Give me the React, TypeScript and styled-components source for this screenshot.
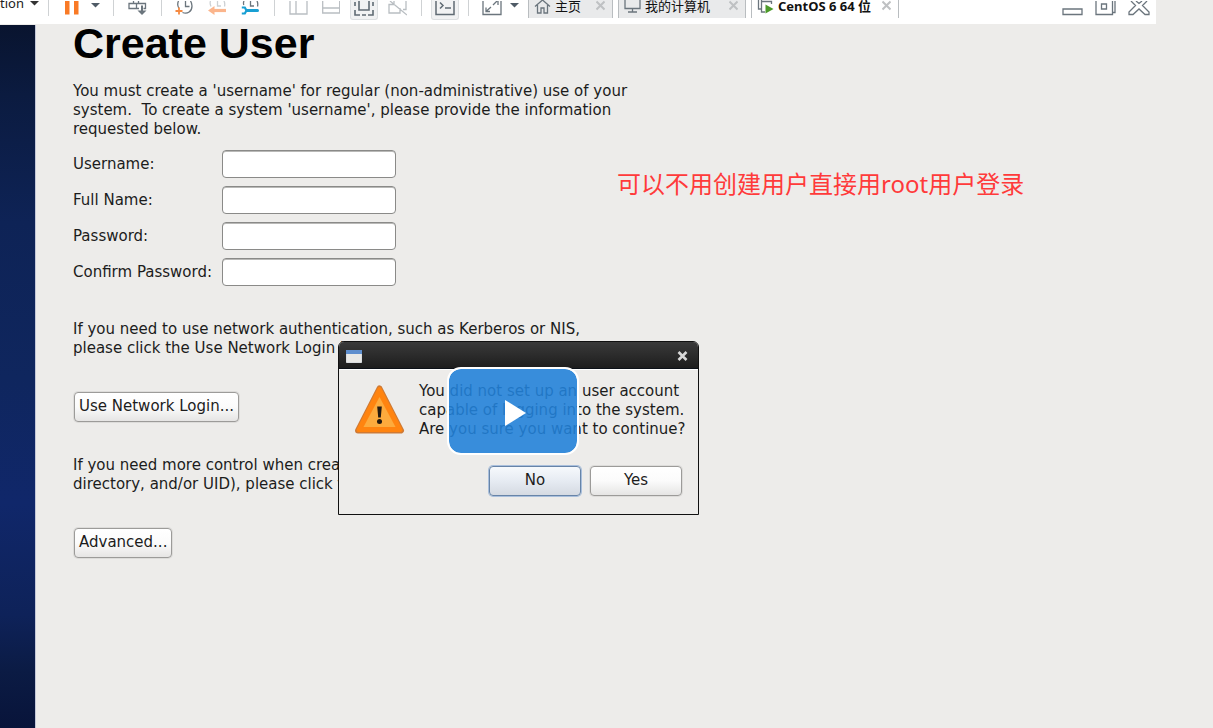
import React from 'react';
import styled, { createGlobalStyle } from 'styled-components';

const GlobalStyle = createGlobalStyle`
  * { box-sizing: border-box; }
  body {
    margin: 0;
    background: #edecea;
    color: #1c1c1c;
    font-family: "DejaVu Sans", "Noto Sans CJK SC", sans-serif;
    font-size: 15px;
    line-height: 19px;
  }
  button, input { font: inherit; color: inherit; }
`;

const Page = styled.div`
  display: flex;
  flex-direction: column;
  min-height: 100vh;
`;

/* ---------- host toolbar ---------- */

const Toolbar = styled.header`
  display: flex;
  align-items: flex-start;
  height: 24px;
  margin-right: 57px;
  overflow: hidden;
  background: #fff;
  font-family: "Noto Sans", "Noto Sans CJK SC", sans-serif;
  font-size: 13px;
  color: #222;
`;

const MenuButton = styled.button`
  display: flex;
  gap: 6px;
  width: 48px;
  padding: 0;
  border: 0;
  background: none;
  line-height: 7px;
`;

const Group = styled.div<{ $gap?: number; $start?: number; $end?: number }>`
  display: flex;
  gap: ${(p) => p.$gap ?? 13}px;
  padding: 0 ${(p) => p.$end ?? 14}px 0 ${(p) => p.$start ?? 14}px;
  height: 16px;
  border-left: 1px solid #cfd2d4;
`;

const Tool = styled.button<{ $pressed?: boolean }>`
  display: block;
  height: 20px;
  padding: 0 ${(p) => (p.$pressed ? 3 : 0)}px;
  border: solid ${(p) => (p.$pressed ? '#dcdfe1' : 'transparent')};
  border-width: ${(p) => (p.$pressed ? '0 1px 1px' : '0')};
  border-radius: 0 0 3px 3px;
  background: ${(p) => (p.$pressed ? '#f1f2f3' : 'none')};
  svg { display: block; }
`;

const Tabs = styled.nav`
  display: flex;
  gap: 5px;
`;

const Tab = styled.div<{ $active?: boolean; $width: number }>`
  display: flex;
  align-items: flex-start;
  width: ${(p) => p.$width}px;
  height: 18px;
  padding: 0 7px 0 5px;
  border: solid #b9bdc0;
  border-width: 0 1px;
  background: ${(p) => (p.$active ? '#fff' : '#e9eaeb')};
  font-weight: ${(p) => (p.$active ? 700 : 400)};
  svg { display: block; flex: none; }
`;

const TabLink = styled.a`
  display: flex;
  gap: 4px;
  line-height: 13px;
  color: #111;
  text-decoration: none;
  white-space: nowrap;
`;

const TabClose = styled.button`
  margin-left: auto;
  padding: 0;
  border: 0;
  background: none;
`;

const WindowControls = styled.div`
  display: flex;
  gap: 11px;
  margin-left: auto;
  padding-right: 6px;
`;

/* ---------- guest screen ---------- */

const Screen = styled.div`
  position: relative;
  display: flex;
  flex: 1;
`;

const Sidebar = styled.aside`
  flex: none;
  width: 36px;
  margin-top: 1px;
  border-right: 1px solid #c3c7d8;
  background: linear-gradient(#09142f 0, #0b1b40 10%, #0e2356 28%, #0f265e 50%, #10276a 68%, #0e2259 84%, #0b1b44 92%, #08143a 100%);
`;

const Content = styled.main`
  flex: 1;
  padding: 0 37px 24px;
`;

const Title = styled.h1`
  margin: 0 0 19px;
  font: bold 43px/39px "Liberation Sans", sans-serif;
  color: #000;
`;

const Text = styled.p`
  margin: 0;
  white-space: pre;
`;

const Form = styled.form`
  display: grid;
  grid-template-columns: 149px 174px;
  row-gap: 8px;
  align-items: center;
  margin: 11px 0 34px;
`;

const Field = styled.input`
  width: 100%;
  height: 28px;
  padding: 0 6px;
  border: 1px solid #8a8a88;
  border-radius: 4px;
  background: #fff;
  box-shadow: inset 0 1px 0 #b9b9b7;
`;

const Button = styled.button<{ $focused?: boolean }>`
  height: 30px;
  padding: 0 4px 2px;
  border: 1px solid ${(p) => (p.$focused ? '#6784a8' : '#9c9b99')};
  border-radius: 4px;
  background: ${(p) =>
    p.$focused ? 'linear-gradient(#f6f9fc, #e6ebf2 50%, #d5dae2)' : 'linear-gradient(#fff, #fbfbfb 50%, #e6e5e4)'};
  box-shadow: ${(p) => (p.$focused ? '0 0 0 1px #a9bfdc' : '0 0 0 1px #dddcda')};
  white-space: nowrap;
`;

const ActionRow = styled.div`
  display: flex;
  padding-left: 1px;
  margin: 34px 0;
`;

const Annotation = styled.p`
  position: absolute;
  left: 617px;
  top: 144px;
  margin: 0;
  font: 24px/32px "Noto Sans", "Noto Sans CJK SC", sans-serif;
  color: #ff3a3a;
  white-space: nowrap;
`;

const Dialog = styled.section`
  position: absolute;
  left: 338px;
  top: 317px;
  width: 361px;
  border: 1px solid #111;
  border-radius: 6px 6px 0 0;
  background: #edecea;
  overflow: hidden;
`;

const DialogBar = styled.header`
  display: flex;
  align-items: center;
  justify-content: space-between;
  height: 27px;
  padding: 2px 10px 0 7px;
  border-bottom: 1px solid #0c1118;
  background: linear-gradient(#3a3a3a, #2d2d2d 45%, #1d1d1d);
  svg { display: block; }
`;

const DialogClose = styled.button`
  padding: 0;
  border: 0;
  background: none;
`;

const DialogBody = styled.div`
  display: flex;
  align-items: flex-start;
  gap: 14px;
  padding: 12px 10px 0 15px;
  border-top: 1px solid #fff;
  svg { flex: none; margin-top: 3px; }
`;

const DialogActions = styled.footer`
  display: flex;
  justify-content: flex-end;
  gap: 9px;
  padding: 27px 16px 18px;
  ${Button} { width: 92px; }
`;

const PlayButton = styled.button`
  position: absolute;
  left: 447px;
  top: 343px;
  display: flex;
  align-items: center;
  justify-content: center;
  width: 132px;
  height: 88px;
  padding: 4px 0 0 5px;
  border: 2px solid #fff;
  border-radius: 14px;
  background: rgba(34, 129, 217, 0.89);
  background-clip: padding-box;
`;

type IconProps = { w: number; h?: number; stroke?: string; children: React.ReactNode };
const Icon = ({ w, h = 18, stroke = '#6b757d', children }: IconProps) => (
  <svg width={w} height={h} viewBox={`0 0 ${w} ${h}`} fill="none" stroke={stroke} strokeWidth="1.3" aria-hidden="true">
    {children}
  </svg>
);

const Caret = () => (
  <Icon w={9} stroke="none">
    <path d="M0 2h9L4.500 6.500z" fill="#4f5b66" />
  </Icon>
);

const MenuCaret = () => (
  <Icon w={9} h={10} stroke="none">
    <path d="M0 1h9L4.500 5.500z" fill="#333" />
  </Icon>
);

const Cross = () => (
  <Icon w={9} h={12} stroke="#bfc1c3">
    <path d="M0.500 1.500l8 8M8.500 1.500l-8 8" strokeWidth="2" />
  </Icon>
);

const fields = [
  { id: 'username', label: 'Username:', type: 'text' },
  { id: 'fullname', label: 'Full Name:', type: 'text' },
  { id: 'password', label: 'Password:', type: 'password' },
  { id: 'confirm', label: 'Confirm Password:', type: 'password' },
];

export default function App() {
  return (
    <Page>
      <GlobalStyle />
      <Toolbar>
        <MenuButton>
          <span>tion</span>
          <MenuCaret />
        </MenuButton>
        <Group $gap={12} $start={16} $end={13}>
          <Tool aria-label="Pause">
            <Icon w={14} stroke="none">
              <path d="M0 0h4.500v13.500H0zM9 0h4.500v13.500H9z" fill="#f97a26" />
            </Icon>
          </Tool>
          <Tool aria-label="Power options"><Caret /></Tool>
        </Group>
        <Group>
          <Tool aria-label="Send keys">
            <Icon w={19}>
              <path d="M10.500 0v2.500M5.500 0v2.500M1 2.500h7.500v5H1zM11 7.500H8.500v-5h9v5h-2" />
              <path d="M14 4.500v6" strokeWidth="2" />
              <path d="M9.500 9.500h9l-4.500 4.500z" fill="#6b757d" stroke="none" />
            </Icon>
          </Tool>
        </Group>
        <Group $start={13} $end={13}>
          <Tool aria-label="Take snapshot">
            <Icon w={20}>
              <path d="M3.500 0C2 3 3 6 4 7M7.500 11.500c5 2 9.500-1 9.500-6.500 0-2-.5-3.500-1.500-5M10.500 0v5.500h4" />
              <path d="M4 6.500v7M.5 10h7" stroke="#f58a42" strokeWidth="1.800" />
            </Icon>
          </Tool>
          <Tool aria-label="Revert snapshot">
            <Icon w={20}>
              <path d="M2.500 0c-.8 2-.4 3.500.5 5.500M16.500 5.500C17 3.500 17 2 16 0M9.500 0v5H13" stroke="#cdd1d4" />
              <path d="M5 9.500h13" stroke="#fbb58c" strokeWidth="3.200" />
              <path d="M0 9.500L6.500 5v9z" fill="#fbb58c" stroke="none" />
            </Icon>
          </Tool>
          <Tool aria-label="Manage snapshots">
            <Icon w={20}>
              <path d="M3 0c-.8 1.500-.7 2.500-.2 4M16.500 5.500c.5-2 .5-3.500-.5-5.500M9.500 0v5H13" />
              <path d="M6 9.500h10.500" stroke="#189fd3" strokeWidth="3" strokeLinecap="round" />
              <path d="M.8 6.500h3L5.500 9.500 3.800 12.500h-3" stroke="#189fd3" strokeWidth="2.200" />
            </Icon>
          </Tool>
        </Group>
        <Group $gap={10}>
          <Tool aria-label="Show library">
            <Icon w={23} stroke="#b9bec2">
              <path d="M1 0v13h17V0M7 0v13" />
            </Icon>
          </Tool>
          <Tool aria-label="Show thumbnails">
            <Icon w={18} stroke="#b9bec2">
              <path d="M.700 0v12h17V0M.700 7h17" />
            </Icon>
          </Tool>
          <Tool $pressed aria-label="Full screen">
            <Icon w={20} stroke="#606b74">
              <path d="M5 0v9h10V0M1 9v5h5M14 14h5V9M8 14h4M1 1v4M19 1v4" strokeWidth="1.600" />
            </Icon>
          </Tool>
          <Tool aria-label="Unity">
            <Icon w={19} stroke="#b9bec2">
              <path d="M6 3.500H1V12h11V7M6 0v3.500M15 8.500h3V0M2 0l17 14" />
            </Icon>
          </Tool>
        </Group>
        <Group $start={9} $end={9}>
          <Tool $pressed aria-label="Console view">
            <Icon w={20} stroke="#606b74">
              <path d="M1 0v13.500h18V0M5 1.500l3 3-3 3M10 7h6" strokeWidth="1.500" />
            </Icon>
          </Tool>
        </Group>
        <Group $gap={7} $start={12} $end={9}>
          <Tool aria-label="Stretch guest">
            <Icon w={22}>
              <path d="M2 0v13.500h18V0" />
              <path d="M5 10.500L10 6M5 6.500v4h4M12 4l4-4M17 4V0" />
            </Icon>
          </Tool>
          <Tool aria-label="Stretch options"><Caret /></Tool>
        </Group>
        <Tabs>
          <Tab $width={85}>
            <TabLink href="#home">
              <Icon w={17}>
                <path d="M1 6.500L8.500 0 16 6.500M3.500 5v8H7V8h3v5h3.500V5" />
              </Icon>
              主页
            </TabLink>
            <TabClose aria-label="Close 主页"><Cross /></TabClose>
          </Tab>
          <Tab $width={128}>
            <TabLink href="#computer">
              <Icon w={17}>
                <path d="M1 0v8.500h15V0M8.500 8.500v3M4 12h9" />
              </Icon>
              我的计算机
            </TabLink>
            <TabClose aria-label="Close 我的计算机"><Cross /></TabClose>
          </Tab>
          <Tab $active $width={148}>
            <TabLink href="#centos">
              <Icon w={17}>
                <path d="M1.500 0v9H4M4.500 0v12H8M4.500 1.500h10V4" />
                <path d="M8.500 4.500l8 4.500-8 4.500z" fill="#4c9a2a" stroke="none" />
              </Icon>
              CentOS 6 64 位
            </TabLink>
            <TabClose aria-label="Close CentOS 6 64 位"><Cross /></TabClose>
          </Tab>
        </Tabs>
        <WindowControls>
          <Tool aria-label="Minimize">
            <Icon w={22}><path d="M1 8h19v5.500H1z" /></Icon>
          </Tool>
          <Tool aria-label="Restore">
            <Icon w={22}><path d="M1 0v13.500h16.500V0M6.500 3h5v5h-5zM17.500 11.500H20V0" /></Icon>
          </Tool>
          <Tool aria-label="Close">
            <Icon w={22}>
              <path d="M3 0l4.500 4.500L1 11v2.500h4l6-5.500 6 5.500h4V11l-6.500-6.500L19 0M8 0l3 2.500L14 0" />
            </Icon>
          </Tool>
        </WindowControls>
      </Toolbar>

      <Screen>
        <Sidebar />
        <Content>
          <Title>Create User</Title>
          <Text>
            {"You must create a 'username' for regular (non-administrative) use of your\nsystem.  To create a system 'username', please provide the information\nrequested below."}
          </Text>
          <Form>
            {fields.map((f) => (
              <React.Fragment key={f.id}>
                <label htmlFor={f.id}>{f.label}</label>
                <Field id={f.id} type={f.type} />
              </React.Fragment>
            ))}
          </Form>
          <Text>
            {'If you need to use network authentication, such as Kerberos or NIS,\nplease click the Use Network Login button.'}
          </Text>
          <ActionRow><Button>Use Network Login...</Button></ActionRow>
          <Text>
            {'If you need more control when creating the user (specifying home\ndirectory, and/or UID), please click the Advanced button.'}
          </Text>
          <ActionRow><Button>Advanced...</Button></ActionRow>
        </Content>

        <Annotation>可以不用创建用户直接用root用户登录</Annotation>

        <Dialog role="dialog" aria-label="Confirm">
          <DialogBar>
            <svg width="16" height="13" viewBox="0 0 16 13" aria-hidden="true">
              <path d="M0.500.500h15v12H.5z" fill="#e9e9e6" stroke="#d9dcdf" />
              <path d="M0 0h16v4H0z" fill="#5f8fce" />
            </svg>
            <DialogClose aria-label="Close dialog">
              <svg width="11" height="10" viewBox="0 0 11 10" aria-hidden="true">
                <path d="M1.500 1l8 8M9.500 1l-8 8" stroke="#d8d8d8" strokeWidth="2.600" />
              </svg>
            </DialogClose>
          </DialogBar>
          <DialogBody>
            <svg width="51" height="50" viewBox="0 0 51 50" aria-hidden="true">
              <path d="M25.500 3.500L47 45.500H4z" fill="#ff8410" stroke="#cf7a35" strokeWidth="6" strokeLinejoin="round" />
              <path d="M25.500 4L46.500 45H4.500z" fill="#ff8410" stroke="#ff8410" strokeWidth="4" strokeLinejoin="round" />
              <path d="M25.500 12L41.500 42h-32z" fill="#fdab3d" />
              <path d="M23.200 21.500h4.600l-1 11h-2.600z" fill="#241a10" />
              <circle cx="25.500" cy="36.500" r="2.500" fill="#241a10" />
            </svg>
            <Text>
              {'You did not set up an user account\ncapable of logging into the system.\nAre you sure you want to continue?'}
            </Text>
          </DialogBody>
          <DialogActions>
            <Button $focused>No</Button>
            <Button>Yes</Button>
          </DialogActions>
        </Dialog>

        <PlayButton aria-label="Play">
          <svg width="21" height="26" viewBox="0 0 21 26" aria-hidden="true">
            <path d="M0 0l21 13L0 26z" fill="#fff" />
          </svg>
        </PlayButton>
      </Screen>
    </Page>
  );
}
